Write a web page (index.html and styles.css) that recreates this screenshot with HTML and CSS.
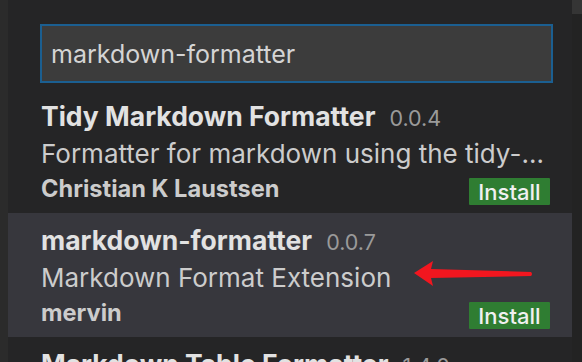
FILE: index.html
```html
<!DOCTYPE html>
<html>
  <head>
    <title>Extensions - markdown-formatter</title>
    <link rel="stylesheet" href="styles.css">
  </head>
  <body>
    <div class="gutter"></div>

    <div class="panel">
      <div class="search">markdown-formatter</div>

      <div class="ext-list">
        <div class="ext">
          <div class="ext-head">
            <span class="ext-name">Tidy Markdown Formatter</span>
            <span class="ext-version">0.0.4</span>
          </div>
          <div class="ext-desc">Formatter for markdown using the tidy-…</div>
          <div class="ext-foot">
            <span class="ext-author">Christian K Laustsen</span>
            <button class="install-btn">Install</button>
          </div>
        </div>

        <div class="ext hovered">
          <div class="ext-head">
            <span class="ext-name">markdown-formatter</span>
            <span class="ext-version">0.0.7</span>
          </div>
          <div class="ext-desc">
            Markdown Format Extension
            <!-- annotation arrow -->
            <svg class="arrow" width="130" height="30" viewBox="0 0 130 30">
              <path d="M2 12 L21 0 L19 8 L119 11 Q121 13 119 15 L19 17 L21 25 Z" fill="#f2161f" />
            </svg>
          </div>
          <div class="ext-foot">
            <span class="ext-author">mervin</span>
            <button class="install-btn">Install</button>
          </div>
        </div>

        <div class="ext">
          <div class="ext-head">
            <span class="ext-name">Markdown Table Formatter</span>
            <span class="ext-version">1.4.0</span>
          </div>
        </div>
      </div>
    </div>

    <div class="scrollbar"><div class="thumb"></div></div>
  </body>
</html>
```

FILE: styles.css
```css
:root {
  --panel-bg: #252526;
  --hover-bg: #37373d;
  --text: #cccccc;
  --title: #e2e2e2;
  --muted: #9a9a9a;
  --green: #2f7d32;
  --focus: #1b5f91;
}

body {
  margin: 0;
  height: 362px;
  display: flex;
  background: #2b2b2b;
  font-family: Inter, "Noto Sans", sans-serif;
  color: var(--text);
  overflow: hidden;
}

.gutter {
  width: 8px;
  flex: none;
}

.panel {
  width: 564px;
  flex: none;
  background: var(--panel-bg);
  padding-top: 24px;
  overflow: hidden;
}

/* Search box */
.search {
  height: 55px;
  margin: 0 19px 0 32px;
  border: 2px solid var(--focus);
  background: #3c3c3c;
  padding-left: 9px;
  display: flex;
  align-items: center;
  font-size: 25px;
  color: #d4d4d4;
}

.ext-list {
  margin-top: 6px;
}

/* Extension rows */
.ext {
  height: 124px;
  box-sizing: border-box;
  padding: 13px 22px 0 33px;
}

.ext.hovered {
  background: var(--hover-bg);
}

.ext-head {
  display: flex;
  align-items: baseline;
  gap: 14px;
  line-height: 28px;
  white-space: nowrap;
}

.ext-name {
  font-size: 26.5px;
  font-weight: bold;
  color: var(--title);
}

.ext-version {
  font-size: 21.5px;
  color: var(--muted);
}

.ext-desc {
  position: relative;
  margin-top: 4px;
  font-size: 26px;
  line-height: 36px;
  white-space: nowrap;
}

.arrow {
  position: absolute;
  left: 371px;
  top: 1px;
}

.ext-foot {
  display: flex;
  justify-content: space-between;
  align-items: center;
  margin-top: 6px;
  height: 27px;
}

.ext-author {
  font-size: 23.6px;
  font-weight: bold;
  margin-bottom: 6px;
}

.install-btn {
  height: 27px;
  width: 81px;
  border: none;
  border-radius: 1px;
  background: var(--green);
  color: #f0f0f0;
  font-family: inherit;
  font-size: 22px;
  font-weight: 500;
  padding: 0;
}

/* Scrollbar on the right */
.scrollbar {
  flex: 1;
  background: #232323;
}

.thumb {
  height: 14px;
  background: #353535;
}
```
